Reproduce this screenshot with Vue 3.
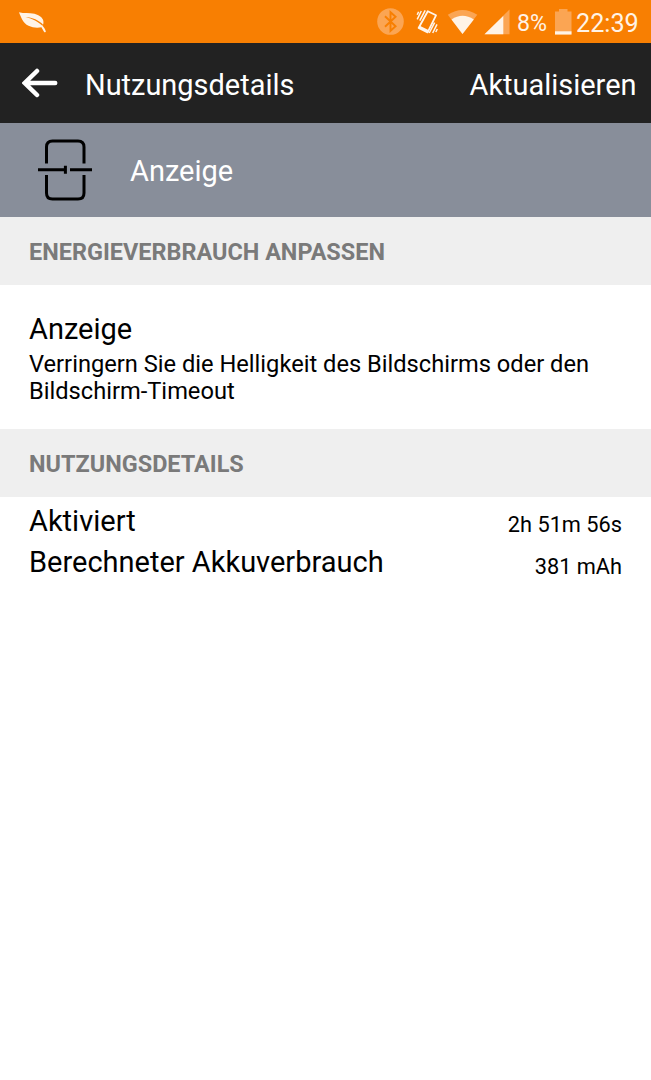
<template>
    <div class="screen">
        <div class="status-bar">
            <svg class="leaf" width="28" height="21" viewBox="0 0 28 21">
                <path
                    d="M0 .2C5 1.8 10 .4 15.5 1.8C21 3.2 25.3 6.8 24.4 11.4C24.2 12.5 23.8 13.2 23.4 13.6C25 15.4 26.2 17.5 26.8 19.2C27 20.4 25.5 20.8 25 19.8L22.4 15.2C19 16 13.5 15.8 9.5 13.8C4 11 2 5.2 0 .2Z"
                    fill="#fff3e6"
                />
                <path d="M6.5 4.9C13.5 5.2 20 8.4 24 12.4L23.2 13.6C19.5 9.8 13.5 6.4 6.5 4.9Z" fill="#f87f02" />
            </svg>

            <div class="status-right">
                <svg width="133" height="30" viewBox="0 0 133 30">
                    <!-- bluetooth -->
                    <circle cx="13.5" cy="14.5" r="13.3" fill="#fba553" />
                    <path
                        d="M8 9.2L18.6 19.2L13.5 23.8V5.2L18.6 9.8L8 19.8"
                        fill="none"
                        stroke="#f87f02"
                        stroke-width="1.9"
                    />
                    <!-- vibrate -->
                    <g fill="none" stroke="#fff5eb" stroke-width="1.5">
                        <path d="M50.8 4.3L59 8.3L50.6 25.4L41.6 21Z" stroke-width="1.8" stroke-linejoin="round" />
                        <path d="M42.2 19.8L51.4 24.3" stroke-width="2.6" />
                        <path d="M40.2 12.3L44.3 4M42.8 13.6L48.2 3.3M40.2 7.8L41.6 4.8" />
                        <path d="M52.2 26L57.6 15.7M55.7 26L60 17.3M58.8 25L60.3 22" />
                    </g>
                    <!-- wifi -->
                    <path d="M70.8 7.8Q85.5 -2 100.3 7.8L85.5 27Z" fill="#fba553" />
                    <path d="M74.5 12.5Q85.5 5 96.8 12.5L85.5 27Z" fill="#fff3e6" />
                    <!-- mobile signal -->
                    <path d="M132.5 2.5V27.3H107.5Z" fill="#fba553" />
                    <path d="M126.3 9V27.3H107.5Z" fill="#fff3e6" />
                </svg>
                <span class="percent">8%</span>
                <svg class="battery" width="17" height="26" viewBox="0 0 17 26">
                    <path d="M4 0H12.5V2.5H16.5V25.5H0V2.5H4Z" fill="#fba553" />
                    <path d="M0 22.3H16.5V25.5H0Z" fill="#fff3e6" />
                </svg>
                <span class="clock">22:39</span>
            </div>
        </div>

        <header class="app-bar">
            <svg class="back" width="36" height="30" viewBox="0 0 36 30">
                <path
                    d="M15 3L2.8 15L15 27M3 15H33.2"
                    fill="none"
                    stroke="#fff"
                    stroke-width="4.5"
                    stroke-linecap="round"
                />
            </svg>
            <h1>Nutzungsdetails</h1>
            <span class="action">Aktualisieren</span>
        </header>

        <div class="banner">
            <svg width="54" height="62" viewBox="0 0 54 62">
                <g fill="none" stroke="#000" stroke-width="3">
                    <path d="M8.5 24.5V8Q8.5 1.9 14.5 1.9H40Q46 1.9 46 8V24.5" />
                    <path d="M8.5 36V54Q8.5 60.1 14.5 60.1H40Q46 60.1 46 54V36" />
                    <path d="M0 30.8H27M32 30.8H54M27.4 26.8V34.8" />
                </g>
            </svg>
            <span>Anzeige</span>
        </div>

        <h2 class="section">ENERGIEVERBRAUCH ANPASSEN</h2>
        <div class="tip">
            <div class="tip-title">Anzeige</div>
            <p>Verringern Sie die Helligkeit des Bildschirms oder den Bildschirm-Timeout</p>
        </div>

        <h2 class="section">NUTZUNGSDETAILS</h2>
        <div class="details">
            <div v-for="row in rows" :key="row.label" class="row">
                <span>{{ row.label }}</span>
                <span class="value">{{ row.value }}</span>
            </div>
        </div>
    </div>
</template>

<script setup>
const rows = [
    { label: 'Aktiviert', value: '2h 51m 56s' },
    { label: 'Berechneter Akkuverbrauch', value: '381 mAh' },
];
</script>

<style>
body {
    margin: 0;
    background: #fff;
}
</style>

<style scoped>
.screen {
    min-height: 1080px;
    background: #fff;
    color: #000;
    font-family: Roboto, sans-serif;
    font-size: 29px;
}

.status-bar {
    display: flex;
    justify-content: space-between;
    height: 43px;
    box-sizing: border-box;
    padding: 0 13px 0 19px;
    background: #f87f02;
    color: #fff3e6;
}

.leaf { margin-top: 12px; }

.status-right {
    display: flex;
    align-items: flex-start;
    padding-top: 7px;
}

.percent {
    margin: 1px 0 0 7px;
    width: 31px;
    font-size: 23.2px;
    line-height: 30px;
    white-space: nowrap;
}

.battery { margin: 2px 4px 0 7px; }

.clock {
    width: 62px;
    font-size: 25.2px;
    line-height: 33px;
}

.app-bar {
    display: flex;
    align-items: center;
    height: 80px;
    box-sizing: border-box;
    padding: 3px 14.5px 0 22px;
    background: #222;
    color: #fff;
}

.back { margin: -3px 27px 0 0; }

h1 {
    margin: 0;
    font-size: 28.95px;
    font-weight: 400;
}

.action {
    margin-left: auto;
    font-size: 28.95px;
}

.banner {
    display: flex;
    align-items: center;
    gap: 38px;
    height: 94px;
    box-sizing: border-box;
    padding: 1px 0 0 38px;
    background: #888e9a;
    color: #fff;
}

.banner svg { margin-top: -1px; }

.section {
    height: 68.4px;
    margin: 0;
    padding-left: 29px;
    background: #efefef;
    color: #7a7a7a;
    font-size: 23.45px;
    font-weight: 700;
    line-height: 70px;
}

.tip {
    height: 143.2px;
    box-sizing: border-box;
    padding: 26.2px 29px 0;
}

.tip-title { line-height: 34px; }

.tip p {
    margin: 5px 0 0;
    font-size: 23.66px;
    line-height: 27.5px;
}

.details {
    padding: 4px 29px 0;
}

.row {
    display: flex;
    justify-content: space-between;
    height: 41.5px;
    line-height: 41.5px;
}

.value {
    padding-top: 3.5px;
    font-size: 21.75px;
}
</style>
